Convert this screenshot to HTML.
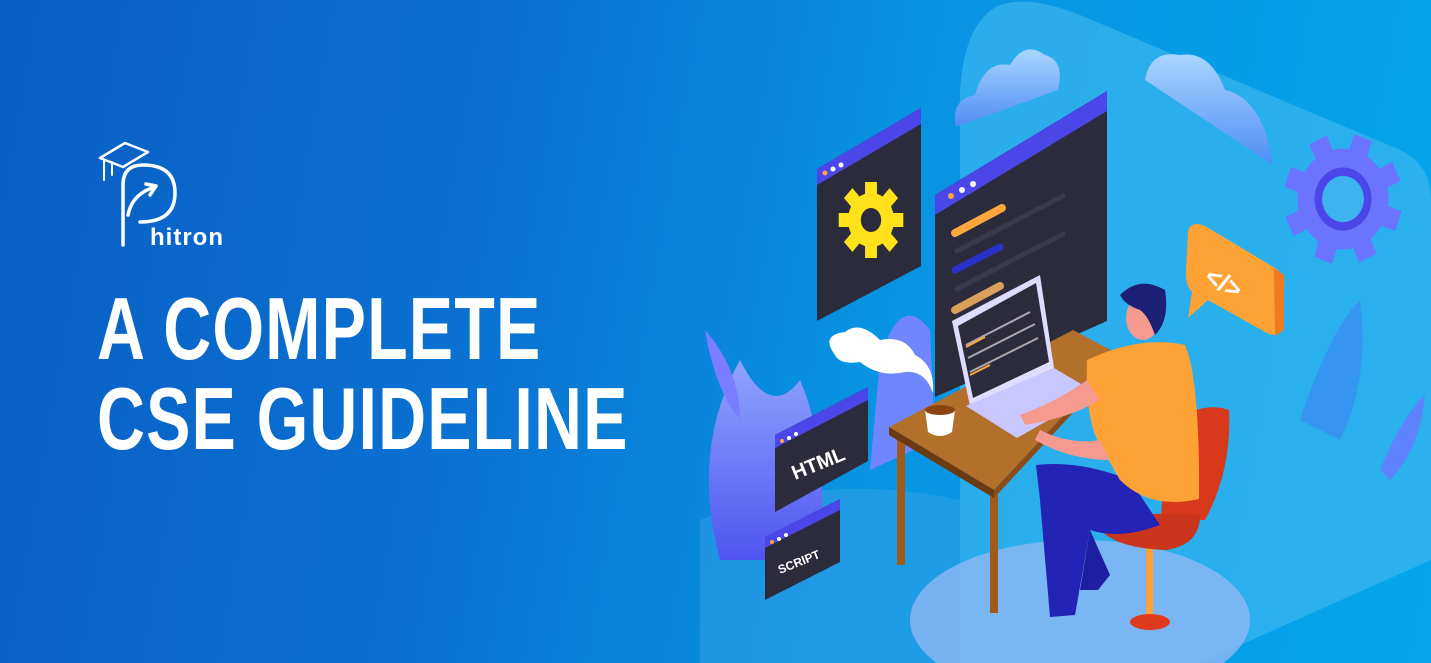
<!DOCTYPE html>
<html><head><meta charset="utf-8"><style>
html,body{margin:0;padding:0;width:1431px;height:663px;overflow:hidden}
body{background:linear-gradient(100deg,#0a5ec4 0%,#0a72d2 35%,#0893e2 60%,#05a6ec 100%);position:relative;font-family:"Liberation Sans",sans-serif}
.t{position:absolute;left:97px;color:#fff;font-weight:bold;font-size:88px;line-height:88px;transform-origin:0 0;transform:scaleX(0.755);white-space:nowrap;letter-spacing:1.5px}
</style></head><body>
<svg width="1431" height="663" style="position:absolute;left:0;top:0;display:block">
<defs>
<linearGradient id="pl" x1="0" y1="0" x2="0" y2="1"><stop offset="0" stop-color="#8fa4ff"/><stop offset="1" stop-color="#4f55f0"/></linearGradient>
<linearGradient id="cl" x1="0" y1="0" x2="0" y2="1"><stop offset="0" stop-color="#a9d6ff"/><stop offset="1" stop-color="#4f8cf5"/></linearGradient>
</defs>
<path d="M1000,5 Q1030,-5 1080,15 L1400,150 Q1431,165 1431,200 L1431,560 L1200,663 L960,663 L960,90 Q965,20 1000,5 Z" fill="#3ab6f0" opacity="0.7"/>
<path d="M700,520 Q820,470 960,500 L960,663 L700,663Z" fill="#4aa8ec" opacity="0.35"/>
<ellipse cx="1080" cy="620" rx="170" ry="80" fill="#8fb8f5" opacity="0.8"/>
<path d="M720,560 Q690,450 740,360 Q770,420 800,380 Q830,450 820,560Z" fill="url(#pl)"/>
<path d="M880,360 Q900,290 930,330 L935,440 L870,470Z" fill="#6f86ff"/>
<path d="M705,330 Q740,370 740,420 Q715,390 705,330Z" fill="#7a7dff"/>
<path d="M1300,420 Q1330,330 1360,300 Q1370,380 1340,440Z" fill="#3a8ff0" opacity="0.8"/>
<path d="M1380,470 Q1400,420 1425,395 Q1420,450 1390,480Z" fill="#6b78ff" opacity="0.8"/>
<path d="M956,127 Q950,100 975,95 Q985,60 1010,65 Q1025,40 1045,55 Q1065,60 1058,90 Z" fill="url(#cl)"/>
<path d="M1145,80 Q1150,50 1180,55 Q1210,50 1225,90 Q1250,95 1265,130 L1273,165 Z" fill="url(#cl)"/>
<polygon points="817,169 921,108 921,266 817,321" fill="#2b2b3c"/>
<polygon points="817,169 921,108 921,124 817,185" fill="#4a46e8"/>
<circle cx="825" cy="173" r="2.5" fill="#ffa63c"/><circle cx="833" cy="169" r="2.5" fill="#fff"/><circle cx="841" cy="165" r="2.5" fill="#fff"/>
<g transform="translate(871,220) scale(0.85,1)">
<circle r="27" fill="#ffe21a"/>
<g fill="#ffe21a"><rect x="-7" y="-38" width="14" height="76"/><rect x="-38" y="-7" width="76" height="14"/><rect x="-7" y="-38" width="14" height="76" transform="rotate(45)"/><rect x="-7" y="-38" width="14" height="76" transform="rotate(-45)"/></g>
<circle r="12" fill="#2b2b3c"/></g>
<polygon points="935,195 1107,91 1107,321 935,397" fill="#2b2b3c"/>
<polygon points="935,195 1107,91 1107,111 935,215" fill="#4a46e8"/>
<circle cx="951" cy="196" r="3" fill="#ffa63c"/><circle cx="962" cy="190" r="3" fill="#fff"/><circle cx="973" cy="184" r="3" fill="#fff"/>
<line x1="955" y1="233" x2="1002" y2="208" stroke="#ffa63c" stroke-width="8" stroke-linecap="round"/>
<line x1="955" y1="270" x2="1000" y2="247" stroke="#2a31c8" stroke-width="7" stroke-linecap="round"/>
<line x1="955" y1="310" x2="1000" y2="286" stroke="#d9a05a" stroke-width="8" stroke-linecap="round"/>
<line x1="955" y1="252" x2="1065" y2="195" stroke="#393a4c" stroke-width="5"/>
<line x1="955" y1="290" x2="1065" y2="233" stroke="#393a4c" stroke-width="5"/>
<polygon points="775,435 868,387 868,461 775,512" fill="#2b2b3c"/>
<polygon points="775,435 868,387 868,400 775,448" fill="#4a46e8"/>
<circle cx="782" cy="441" r="2" fill="#ffa63c"/><circle cx="789" cy="438" r="2" fill="#fff"/><circle cx="796" cy="434" r="2" fill="#fff"/>
<text x="0" y="0" transform="translate(795,480) rotate(-22)" fill="#fff" font-weight="bold" font-size="20">HTML</text>
<polygon points="765,537 840,499 840,562 765,600" fill="#2b2b3c"/>
<polygon points="765,537 840,499 840,510 765,548" fill="#4a46e8"/>
<circle cx="772" cy="542" r="2" fill="#ffa63c"/><circle cx="779" cy="539" r="2" fill="#fff"/><circle cx="786" cy="535" r="2" fill="#fff"/>
<text transform="translate(780,574) rotate(-22)" fill="#fff" font-weight="bold" font-size="12">SCRIPT</text>
<path d="M835,355 Q820,335 845,332 Q860,320 880,340 Q905,335 915,355 Q935,365 933,393 Q925,370 905,372 Q880,378 860,362 Q840,365 835,355Z" fill="#fff"/>
<rect x="897" y="440" width="8" height="125" fill="#a05a1c"/>
<rect x="990" y="495" width="8" height="118" fill="#a05a1c"/>
<polygon points="889,427 1073,330 1120,355 994,490" fill="#b2702a"/>
<polygon points="889,427 994,490 994,498 889,435" fill="#6b3a10"/>
<polygon points="994,490 1120,355 1120,362 994,498" fill="#8a4d18"/>
<path d="M925,410 L928,432 Q940,440 952,432 L955,410Z" fill="#fff"/>
<ellipse cx="940" cy="410" rx="15" ry="5" fill="#8a4414"/>
<polygon points="952,321 1040,275 1054,368 970,406" fill="#dedcff"/>
<polygon points="958,326 1036,283 1049,362 973,398" fill="#2b2b3c"/>
<line x1="966" y1="345" x2="1030" y2="312" stroke="#aaa" stroke-width="2"/><line x1="968" y1="358" x2="1035" y2="324" stroke="#aaa" stroke-width="2"/><line x1="970" y1="372" x2="1038" y2="338" stroke="#aaa" stroke-width="2"/>
<line x1="966" y1="347" x2="985" y2="337" stroke="#ffa63c" stroke-width="2"/><line x1="970" y1="375" x2="990" y2="365" stroke="#ffa63c" stroke-width="2"/>
<polygon points="966,406 1054,368 1096,393 1017,438" fill="#c9c7ff"/>
<rect x="1146" y="548" width="7" height="72" fill="#ffa235"/>
<ellipse cx="1150" cy="622" rx="20" ry="8" fill="#e03a1c"/>
<path d="M1166,427 Q1200,400 1229,410 Q1232,470 1205,520 L1161,520Z" fill="#d8381c"/>
<path d="M1096,524 Q1130,510 1200,515 Q1200,545 1166,550 Q1110,548 1096,524Z" fill="#c9361d"/>
<path d="M1036,465 Q1080,460 1130,480 L1160,525 Q1120,540 1090,530 L1075,615 L1050,617 L1040,500Z" fill="#2323b5"/>
<path d="M1090,530 L1110,575 L1098,590 L1080,590Z" fill="#1e1ea0"/>
<path d="M1087,360 Q1140,335 1185,345 Q1200,380 1199,499 Q1150,510 1120,480 L1100,445 Q1085,420 1087,360Z" fill="#ffa235"/>
<path d="M1087,380 Q1060,400 1020,415 L1025,425 Q1070,418 1100,400Z" fill="#f49a8e"/>
<path d="M1100,440 Q1070,445 1040,430 L1035,440 Q1070,460 1110,460Z" fill="#f49a8e"/>
<ellipse cx="1143" cy="318" rx="17" ry="22" fill="#f49a8e"/>
<path d="M1120,295 Q1140,275 1165,290 Q1170,320 1155,335 Q1148,315 1140,310 Q1125,305 1120,295Z" fill="#1b1f75"/>
<path d="M1188,232 Q1190,220 1205,226 L1275,268 Q1286,275 1284,290 L1282,325 Q1278,340 1265,332 L1208,300 L1188,318 L1192,292 Q1185,285 1186,270Z" fill="#ffa235"/>
<path d="M1274,268 L1284,275 L1284,330 L1275,336Z" fill="#f07a20"/>
<text transform="translate(1203,282) rotate(28)" fill="#fff" font-weight="bold" font-size="26">&lt;/&gt;</text>
<g transform="translate(1343,199) scale(0.95,1.05) rotate(20)">
<circle r="48" fill="#6b74ff"/>
<g fill="#6b74ff"><rect x="-10" y="-62" width="20" height="124"/><rect x="-62" y="-10" width="124" height="20"/><rect x="-10" y="-62" width="20" height="124" transform="rotate(45)"/><rect x="-10" y="-62" width="20" height="124" transform="rotate(-45)"/></g>
<circle r="30" fill="#4a46e8"/><circle r="22" fill="#3db3f0"/></g>
<g fill="none" stroke="#fff" stroke-width="3.5" stroke-linecap="round" stroke-linejoin="round">
<path d="M123,245 L123,185 Q123,165 143,165 Q175,165 175,193 Q175,222 140,222"/>
<path d="M128,215 Q132,195 152,188"/>
<path d="M146,184 L156,186 L150,195"/>
<path d="M100,158 L125,143 L148,152 L123,167Z" stroke-width="2.5"/>
<path d="M112,162 L112,175 M104,161 L104,180" stroke-width="2"/>
</g>
</svg>
<div style="position:absolute;left:150px;top:225px;color:#fff;font-weight:bold;font-size:24px;line-height:26px;letter-spacing:1px">hitron</div>
<div class="t" style="top:285px">A COMPLETE</div>
<div class="t" style="top:375px">CSE GUIDELINE</div>
</body></html>
